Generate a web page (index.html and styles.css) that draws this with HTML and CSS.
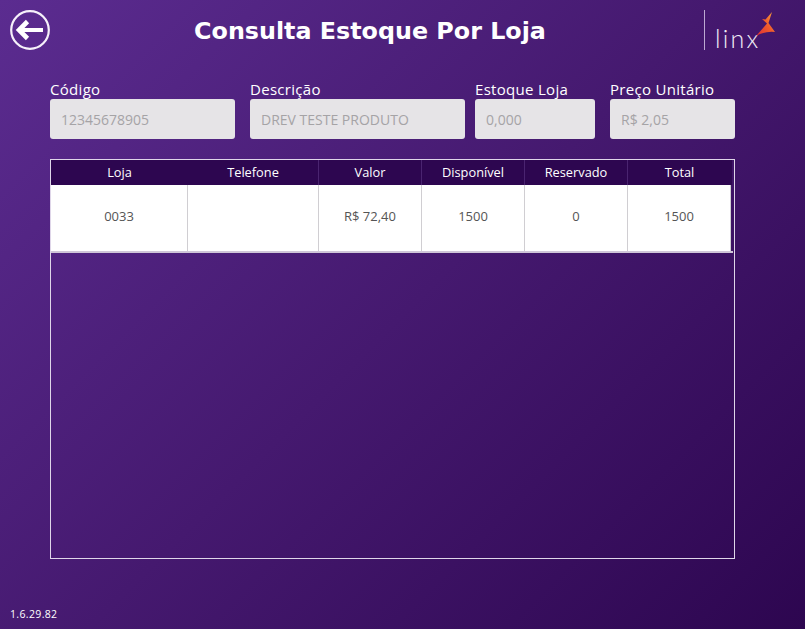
FILE: index.html
```html
<!DOCTYPE html>
<html lang="pt-BR">
<head>
  <meta charset="UTF-8" />
  <meta name="viewport" content="width=device-width, initial-scale=1.0" />
  <title>Consulta Estoque Por Loja</title>
  <link rel="stylesheet" href="styles.css">
</head>
<body>
  <header class="top">
    <a class="back" href="#" aria-label="Voltar">
      <svg width="42" height="42" viewBox="0 0 42 42">
        <circle cx="20" cy="20" r="18.8" fill="none" stroke="#f6f1fa" stroke-width="2.2"/>
        <path d="M9 20 L33 20" fill="none" stroke="#fff" stroke-width="4"/>
        <path d="M17.5 11.5 L9 20 L17.5 28.5" fill="none" stroke="#fff" stroke-width="4.6"/>
      </svg>
    </a>
    <h1>Consulta Estoque Por Loja</h1>
    <div class="logo">
      <span class="logo-name">linx</span>
      <svg class="logo-mark" width="20" height="26" viewBox="0 0 20 26">
        <defs>
          <linearGradient id="spark" x1="0" y1="1" x2="1" y2="0.1">
            <stop offset="0" stop-color="#dd2c35"/>
            <stop offset="0.55" stop-color="#ef5a2c"/>
            <stop offset="1" stop-color="#f7a23a"/>
          </linearGradient>
        </defs>
        <path d="M16 1 L9.5 8.5 L6 8 L11 12.5 L0 25 Q9 20 19 21 L12.5 12 Z" fill="url(#spark)"/>
      </svg>
    </div>
  </header>

  <section class="fields">
    <div class="field codigo">
      <label>Código</label>
      <div class="input">12345678905</div>
    </div>
    <div class="field descricao">
      <label>Descrição</label>
      <div class="input">DREV TESTE PRODUTO</div>
    </div>
    <div class="field estoque">
      <label>Estoque Loja</label>
      <div class="input">0,000</div>
    </div>
    <div class="field preco">
      <label>Preço Unitário</label>
      <div class="input">R$ 2,05</div>
    </div>
  </section>

  <main class="grid-box">
    <div class="row head">
      <div class="cell">Loja</div>
      <div class="cell sep">Telefone</div>
      <div class="cell sep">Valor</div>
      <div class="cell sep">Disponível</div>
      <div class="cell sep">Reservado</div>
      <div class="cell">Total</div>
    </div>
    <div class="row body">
      <div class="cell">0033</div>
      <div class="cell"></div>
      <div class="cell">R$ 72,40</div>
      <div class="cell">1500</div>
      <div class="cell">0</div>
      <div class="cell">1500</div>
    </div>
  </main>

  <footer class="version">1.6.29.82</footer>
</body>
</html>
```

FILE: styles.css
```css
html, body {
  height: 100%;
}

body {
  margin: 0;
  height: 629px;
  box-sizing: border-box;
  overflow: hidden;
  font-family: "Open Sans", "Noto Sans", sans-serif;
  color: white;
  background: linear-gradient(135deg, #5b2c90 0%, #45196f 50%, #2d0650 100%);
  padding: 10px 70px 0 50px;
}

.top {
  display: flex;
  align-items: flex-start;
  height: 70px;
  margin: 0 -70px 0 -40px;
}

.back {
  display: block;
  width: 42px;
  height: 42px;
}

.top h1 {
  margin: 5px 0 0;
  width: 636px;
  text-align: center;
  font-family: "DejaVu Sans", sans-serif;
  font-size: 23.8px;
  font-weight: 700;
  line-height: 32px;
}

.logo {
  display: flex;
  align-items: flex-end;
  width: 70px;
  height: 40px;
  margin-left: 16px;
  border-left: 1px solid #bda9d2;
  position: relative;
}

.logo-name {
  margin-left: 10px;
  font-family: "Lato", sans-serif;
  font-weight: 300;
  font-size: 25px;
  line-height: 24px;
  letter-spacing: 2.2px;
  color: #f1ecf6;
}

.logo-mark {
  position: absolute;
  left: 51px;
  top: 1px;
}

.fields {
  display: flex;
  gap: 15px;
}

.field label {
  display: block;
  font-size: 15px;
  line-height: 19px;
  letter-spacing: 0.3px;
}

.input {
  box-sizing: border-box;
  height: 40px;
  padding: 0 11px;
  line-height: 42px;
  font-size: 14px;
  color: #a5a3a6;
  background: #e6e4e7;
  border-radius: 3px;
  white-space: nowrap;
}

.codigo { width: 185px; }
.descricao { width: 215px; }
.estoque { width: 120px; margin-left: -5px; }
.preco { width: 125px; }

.grid-box {
  box-sizing: border-box;
  width: 685px;
  height: 400px;
  margin-top: 20px;
  border: 1px solid #dfd6e9;
}

.row {
  display: grid;
  grid-template-columns: 137px 131px 103px 103px 103px 103px;
}

.head {
  height: 25px;
  background: #2d0650;
  margin-right: 2px;
  font-size: 12.8px;
  line-height: 25px;
}

.head .cell {
  text-align: center;
}

.head .sep {
  border-right: 1px solid #4a2470;
}

.body {
  height: 68px;
  box-sizing: border-box;
  border-bottom: 2px solid #cfc6d8;
  margin-right: 1px;
  font-size: 13px;
  color: #555;
}

.body .cell {
  background: white;
  border-right: 1px solid #d0ced2;
  text-align: center;
  line-height: 63px;
}

.version {
  position: absolute;
  left: 10px;
  top: 608px;
  font-size: 10.5px;
  letter-spacing: 0.35px;
  line-height: 13px;
}
```
